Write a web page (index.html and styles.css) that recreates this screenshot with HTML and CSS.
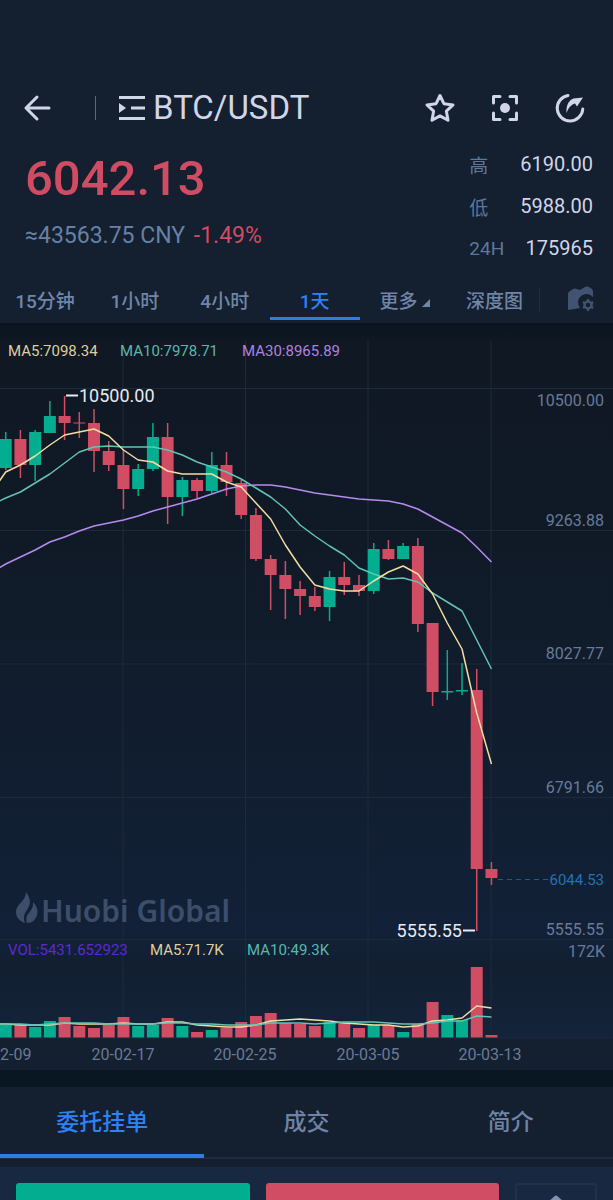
FILE: index.html
```html
<!DOCTYPE html>
<html lang="zh-CN">
<head>
    <meta charset="UTF-8">
    <meta name="viewport" content="width=device-width, initial-scale=1.0">
    <title>BTC/USDT</title>
    <link rel="stylesheet" href="styles.css">
</head>
<body>
    <div class="app">
        <header class="topbar">
            <button class="icon-button back" aria-label="返回">
                <svg width="28" height="28" viewBox="0 0 28 28"><path d="M26 14H3M14 3L3 14l11 11" fill="none" stroke="currentColor" stroke-width="3" stroke-linecap="round" stroke-linejoin="round"/></svg>
            </button>
            <span class="separator"></span>
            <button class="pair">
                <svg width="28" height="26" viewBox="0 0 28 26"><path d="M1 1h26v3H1zM13 11.500h14v3H13zM1 22h26v3H1zM1 8l7 5-7 5z" fill="currentColor"/></svg>
                <span>BTC/USDT</span>
            </button>
            <div class="actions">
                <button class="icon-button" aria-label="收藏">
                    <svg width="34" height="34" viewBox="0 0 34 34"><path d="M17 4.500l3.900 8.200 9.100 1.200-6.600 6.300 1.600 9.100-8-4.400-8 4.400 1.600-9.100L4 13.900l9.100-1.200z" fill="none" stroke="currentColor" stroke-width="3" stroke-linejoin="round"/></svg>
                </button>
                <button class="icon-button" aria-label="扫一扫">
                    <svg width="34" height="34" viewBox="0 0 34 34"><path d="M5.500 12V5.500H12M22 5.500h6.500V12M28.500 22v6.500H22M12 28.500H5.500V22" fill="none" stroke="currentColor" stroke-width="3" stroke-linecap="round" stroke-linejoin="round"/><circle cx="17" cy="17" r="5" fill="currentColor"/></svg>
                </button>
                <button class="icon-button" aria-label="分享">
                    <svg width="34" height="34" viewBox="0 0 34 34"><path d="M15 4.500A12.800 12.800 0 1 0 29.800 18" fill="none" stroke="currentColor" stroke-width="3" stroke-linecap="round"/><path d="M13.500 22C13 14 16 9 20.500 7.500L30 6.500l-6 9-2-3c-4 1-6.500 4.500-8.500 9.500z" fill="currentColor"/></svg>
                </button>
            </div>
        </header>

        <section class="summary">
            <div class="quote">
                <div class="price">6042.13</div>
                <div class="converted">≈43563.75 CNY <span class="change">-1.49%</span></div>
            </div>
            <dl class="stats">
                <dt>高</dt><dd>6190.00</dd>
                <dt>低</dt><dd>5988.00</dd>
                <dt>24H</dt><dd>175965</dd>
            </dl>
        </section>

        <nav class="periods">
            <button class="period">15分钟</button>
            <button class="period">1小时</button>
            <button class="period">4小时</button>
            <button class="period active">1天</button>
            <button class="period">更多<svg class="corner" width="8" height="8" viewBox="0 0 8 8"><path d="M8 0v8H0z" fill="currentColor"/></svg></button>
            <button class="period">深度图</button>
            <button class="chart-settings" aria-label="图表设置">
                <svg width="28" height="26" viewBox="0 0 28 26">
                    <path d="M1 24V8q0-2 2-3l3-2q2-1 4 0l3 1 5-3q2-1 4 0l3 2q1 1 1 3v5a8.500 8.500 0 0 0-13 11z" fill="#415370"/>
                    <circle cx="21" cy="19" r="3.500" fill="none" stroke="#415370" stroke-width="2.500"/>
                    <path d="M21 13v2.500M21 22.500V25M16 16l2 1.200M24 20.800l2.200 1.200M16 22l2-1.200M24 17.200l2.200-1.200" stroke="#415370" stroke-width="2.200"/>
                </svg>
            </button>
        </nav>

        <main class="chart">
            <svg class="chart-canvas" viewBox="0 341 613 729">
                <g class="grid">
                    <path d="M0 388.500H613M0 530.500H613M0 664H613M0 797.500H613M0 939.500H613M0 1038H613"/>
                    <path d="M123 341V1038M245.500 341V1038M368 341V1038M491 341V1038"/>
                </g>

                <g class="watermark">
                    <path d="M26 892c6 8 4 13 1 18-3 4-4 8-2 13-6-2-9-6-9-11 0-8 10-11 10-20z"/>
                    <path d="M33 902c5 5 6 12 2 17-2 3-5 4-8 4-2-6 1-9 4-13 2-3 2-5 2-8z"/>
                    <text x="41" y="922">Huobi Global</text>
                </g>

                <g id="volumes"></g>
                <g id="candles"></g>
                <g id="lines"></g>

                <path class="current-line" d="M498 879.500H549"/>
                <path class="marker" d="M66 395.500H78M463 930.500H475"/>
                <text class="extreme" x="79" y="402">10500.00</text>
                <text class="extreme" x="462" y="937" text-anchor="end">5555.55</text>

                <g class="legend">
                    <text class="ma5" x="8" y="356">MA5:7098.34</text>
                    <text class="ma10" x="120" y="356">MA10:7978.71</text>
                    <text class="ma30" x="242" y="356">MA30:8965.89</text>
                    <text class="vol" x="8" y="955">VOL:5431.652923</text>
                    <text class="ma5" x="150" y="955">MA5:71.7K</text>
                    <text class="ma10" x="247" y="955">MA10:49.3K</text>
                </g>

                <g class="axis" text-anchor="end">
                    <text x="604" y="406">10500.00</text>
                    <text x="604" y="526">9263.88</text>
                    <text x="604" y="659">8027.77</text>
                    <text x="604" y="793">6791.66</text>
                    <text class="current" x="604" y="885">6044.53</text>
                    <text x="604" y="935">5555.55</text>
                    <text x="605" y="957">172K</text>
                </g>
                <g class="axis" text-anchor="middle">
                    <text x="0" y="1060">20-02-09</text>
                    <text x="123" y="1060">20-02-17</text>
                    <text x="245" y="1060">20-02-25</text>
                    <text x="368" y="1060">20-03-05</text>
                    <text x="490" y="1060">20-03-13</text>
                </g>
            </svg>
        </main>

        <nav class="sections">
            <button class="section-tab active">委托挂单</button>
            <button class="section-tab">成交</button>
            <button class="section-tab">简介</button>
        </nav>

        <footer class="trade">
            <button class="trade-button buy" aria-label="买入"></button>
            <button class="trade-button sell" aria-label="卖出"></button>
            <button class="trade-button more" aria-label="展开">
                <svg width="22" height="22" viewBox="0 0 22 22"><path d="M3 10l8-7 8 7M11 3v16" fill="none" stroke="currentColor" stroke-width="3" stroke-linecap="round" stroke-linejoin="round"/></svg>
            </button>
        </footer>
    </div>
    <script src="chart.js"></script>
</body>
</html>
```
FILE: styles.css
```css
* {
    box-sizing: border-box;
}
body {
    margin: 0;
    background: #141f30;
    color: #d0d5ea;
    font-family: Roboto, "Noto Sans CJK SC", sans-serif;
}
button {
    background: none;
    border: none;
    padding: 0;
    margin: 0;
    color: inherit;
    font-family: inherit;
    cursor: pointer;
}
svg {
    display: block;
}
.app {
    height: 100vh;
    overflow: hidden;
    padding-top: 84px;
}
.topbar {
    display: flex;
    align-items: center;
    height: 48px;
    padding: 0 26px 0 23px;
}
.separator {
    width: 1px;
    height: 24px;
    margin: 0 22px 0 44px;
    background: #536788;
}
.pair {
    display: flex;
    align-items: center;
    gap: 7px;
    font-size: 33px;
    line-height: 40px;
}
.actions {
    display: flex;
    gap: 31px;
    margin-left: auto;
}
.summary {
    display: flex;
    justify-content: space-between;
    height: 143px;
    padding: 11px 20px 0 25px;
}
.quote {
    padding-top: 6px;
}
.price {
    color: #cf4c63;
    font-size: 49px;
    font-weight: 500;
    line-height: 60px;
}
.converted {
    margin-top: 12px;
    color: #6681a6;
    font-size: 23px;
    line-height: 30px;
}
.change {
    margin-left: 3px;
    color: #cf4c63;
}
.stats {
    display: grid;
    grid-template-columns: 51px auto;
    grid-auto-rows: 42px;
    align-items: center;
    margin: 0;
    font-size: 20px;
}
.stats dt {
    color: #5f7799;
    font-size: 19px;
}
.stats dd {
    margin: 0;
    text-align: right;
}
.periods {
    display: flex;
    height: 48px;
    color: #7185a6;
}
.period {
    position: relative;
    display: flex;
    flex: 1;
    align-items: center;
    justify-content: center;
    font-size: 19px;
    font-weight: 500;
    white-space: nowrap;
}
.period.active {
    color: #2e82f2;
}
.period.active::after {
    content: "";
    position: absolute;
    left: 0;
    right: 0;
    bottom: 3px;
    height: 3px;
    background: #2e7de4;
}
.corner {
    margin: 8px 0 0 4px;
}
.chart-settings {
    display: flex;
    flex: 0 0 12%;
    align-items: center;
    justify-content: center;
    padding-left: 9px;
    background: linear-gradient(#202c3e, #202c3e) 0 50% / 1px 24px no-repeat;
}
.chart {
    padding-top: 18px;
    background: linear-gradient(#08151f 0, #0f1823 18px, #101a27 220px, #122138 620px, #121f31 640px, #13233a 715px, #141f30 716px);
}
.chart-canvas {
    width: 100%;
    height: auto;
}
.grid path {
    fill: none;
    stroke: #1f2a39;
}
.watermark {
    fill: #3c4e69;
    font-family: "Noto Sans", sans-serif;
    font-size: 30px;
    font-weight: 600;
}
.up {
    fill: #03ae90;
    stroke: #03ae90;
}
.down {
    fill: #d04d64;
    stroke: #d04d64;
}
.wick {
    stroke-width: 1.5;
}
.bar {
    stroke: none;
}
.line {
    fill: none;
    stroke-width: 1.5;
    stroke-linejoin: round;
}
.line.ma5 {
    stroke: #f3dda0;
}
.line.ma10 {
    stroke: #61c4b4;
}
.line.ma30 {
    stroke: #b889ee;
}
.current-line {
    stroke: #1f5c8c;
    stroke-dasharray: 5 4;
}
.marker {
    stroke: #e6eaf3;
    stroke-width: 2;
}
.extreme {
    fill: #e6eaf3;
    font-size: 18px;
}
.legend {
    font-size: 15px;
}
text.ma5 {
    fill: #dfcf9a;
}
text.ma10 {
    fill: #5bb8a9;
}
text.ma30 {
    fill: #af82e0;
}
text.vol {
    fill: #5c2bd0;
}
.axis {
    fill: #697a97;
    font-size: 16px;
}
.axis .current {
    fill: #2273b4;
    font-size: 15px;
}
.sections {
    display: flex;
    height: 97px;
    border-top: 17px solid #081722;
    padding-bottom: 9px;
    background: linear-gradient(#202c3e, #202c3e) 0 70px / 100% 2px no-repeat;
}
.section-tab {
    flex: 1;
    padding-top: 4px;
    color: #6f83a5;
    font-size: 23px;
    font-weight: 500;
    line-height: 60px;
    border-bottom: 4px solid transparent;
}
.section-tab.active {
    color: #2e82f2;
    border-bottom-color: #2e7de4;
}
.trade {
    display: flex;
    gap: 16px;
    padding: 16px;
    background: #182840;
}
.trade-button {
    flex: 1;
    height: 56px;
    border-radius: 3px;
}
.buy {
    background: #03ae90;
}
.sell {
    background: #d04d64;
}
.more {
    display: flex;
    flex: 0 0 82px;
    justify-content: center;
    padding-top: 9px;
    border: 2px solid #21314a;
    color: #7f92b3;
}
```
FILE: chart.js
```js
// [direction, high, body top, body bottom, low, volume top]
const data = [
    ['up', 432, 439, 468, 470, 1025],
    ['down', 430, 439, 465, 478, 1025],
    ['up', 430, 432, 465, 481, 1027],
    ['up', 401, 416, 433, 433, 1021],
    ['down', 396, 416, 423, 440, 1017],
    ['down', 412, 422.5, 423.5, 438, 1026],
    ['down', 409, 423, 451, 472, 1028],
    ['down', 441, 451, 465, 471, 1025],
    ['down', 450, 465, 489, 509, 1017],
    ['up', 464, 469, 489, 496, 1026],
    ['up', 423, 437, 469, 471, 1025],
    ['down', 423, 437, 497, 524, 1018],
    ['up', 477, 480, 497, 516, 1026],
    ['down', 478, 480, 491, 498, 1032],
    ['up', 452, 465, 491, 493, 1030],
    ['down', 452, 465, 482, 496, 1028],
    ['down', 480, 483, 515, 519, 1022],
    ['down', 508, 515, 559, 561, 1016],
    ['down', 555, 559, 575, 610, 1013],
    ['down', 561, 575, 589, 619, 1023],
    ['down', 581, 589, 596, 615, 1024],
    ['down', 587, 596, 607, 611, 1026],
    ['up', 571, 577, 607, 621, 1022],
    ['down', 562, 577, 585, 595, 1023],
    ['down', 575, 585, 591, 596, 1028],
    ['up', 543, 549, 591, 594, 1025],
    ['down', 540, 549, 559, 560, 1025],
    ['up', 543, 546, 559, 559, 1032],
    ['down', 538, 546, 624, 632, 1024],
    ['down', 623, 623, 692, 706, 1002],
    ['up', 650, 691, 692.5, 700, 1015],
    ['up', 663, 690, 691.5, 695, 1020],
    ['down', 669, 690, 869, 931, 967],
    ['down', 862, 869, 878, 885, 1035]
];

const averages = [
    ['ma30', [573, 564, 557, 550, 542, 537, 531, 526, 523, 520, 516, 511, 507, 503, 499, 494, 489, 486, 485, 485, 487, 490, 493, 495, 497, 499, 500, 501, 504, 509, 517, 525, 533, 547, 562]],
    ['ma10', [505, 498, 492, 483, 474, 463, 452, 447, 446, 447, 447, 447, 450, 455, 462, 467, 472, 479, 488, 497, 509, 525, 536, 546, 555, 568, 574, 579, 578, 582, 593, 602, 611, 640, 669]],
    ['ma5', [493, 472, 465, 456, 445, 435, 432, 429, 436, 450, 460, 462, 471, 474, 474, 474, 482, 487, 503, 519, 545, 567, 585, 589, 591, 591, 581, 572, 566, 574, 594, 623, 649, 713, 764]],
    ['ma5', [1024, 1024, 1025, 1025, 1025, 1023, 1024, 1024, 1024, 1023, 1024, 1024, 1022, 1022, 1025, 1026, 1027, 1027, 1025, 1021, 1020, 1019, 1020, 1021, 1023, 1024, 1025, 1025, 1027, 1026, 1021, 1020, 1018, 1006, 1008]],
    ['ma10', [1024, 1024, 1024, 1025, 1024, 1023, 1023, 1023, 1024, 1024, 1024, 1024, 1023, 1023, 1024, 1024, 1025, 1025, 1025, 1023, 1023, 1023, 1024, 1023, 1022, 1022, 1022, 1023, 1024, 1024, 1023, 1021, 1021, 1016, 1017]]
];

const step = 14.72;
const first = 5.7;
const barWidth = 12;
const volumeBase = 1037.5;

// averages hold one point per candle, plus one left of the visible area
averages.forEach(([, values]) => {
    while (values.length > data.length + 1) values.shift();
});

let candles = '';
let volumes = '';
data.forEach(([dir, high, top, bottom, low, volume], i) => {
    const x = first + i * step;
    const left = x - barWidth / 2;
    candles += `<g class="${dir}"><path class="wick" d="M${x} ${high}V${low}"/>` +
        `<rect class="bar" x="${left}" y="${top}" width="${barWidth}" height="${bottom - top}"/></g>`;
    volumes += `<g class="${dir}"><rect class="bar" x="${left}" y="${volume}" width="${barWidth}" height="${volumeBase - volume}"/></g>`;
});

const lines = averages.map(([name, values]) => {
    const points = values.map((y, i) => `${first + (i - 1) * step},${y}`).join(' ');
    return `<polyline class="line ${name}" points="${points}"/>`;
}).join('');

document.getElementById('candles').innerHTML = candles;
document.getElementById('volumes').innerHTML = volumes;
document.getElementById('lines').innerHTML = lines;
```
